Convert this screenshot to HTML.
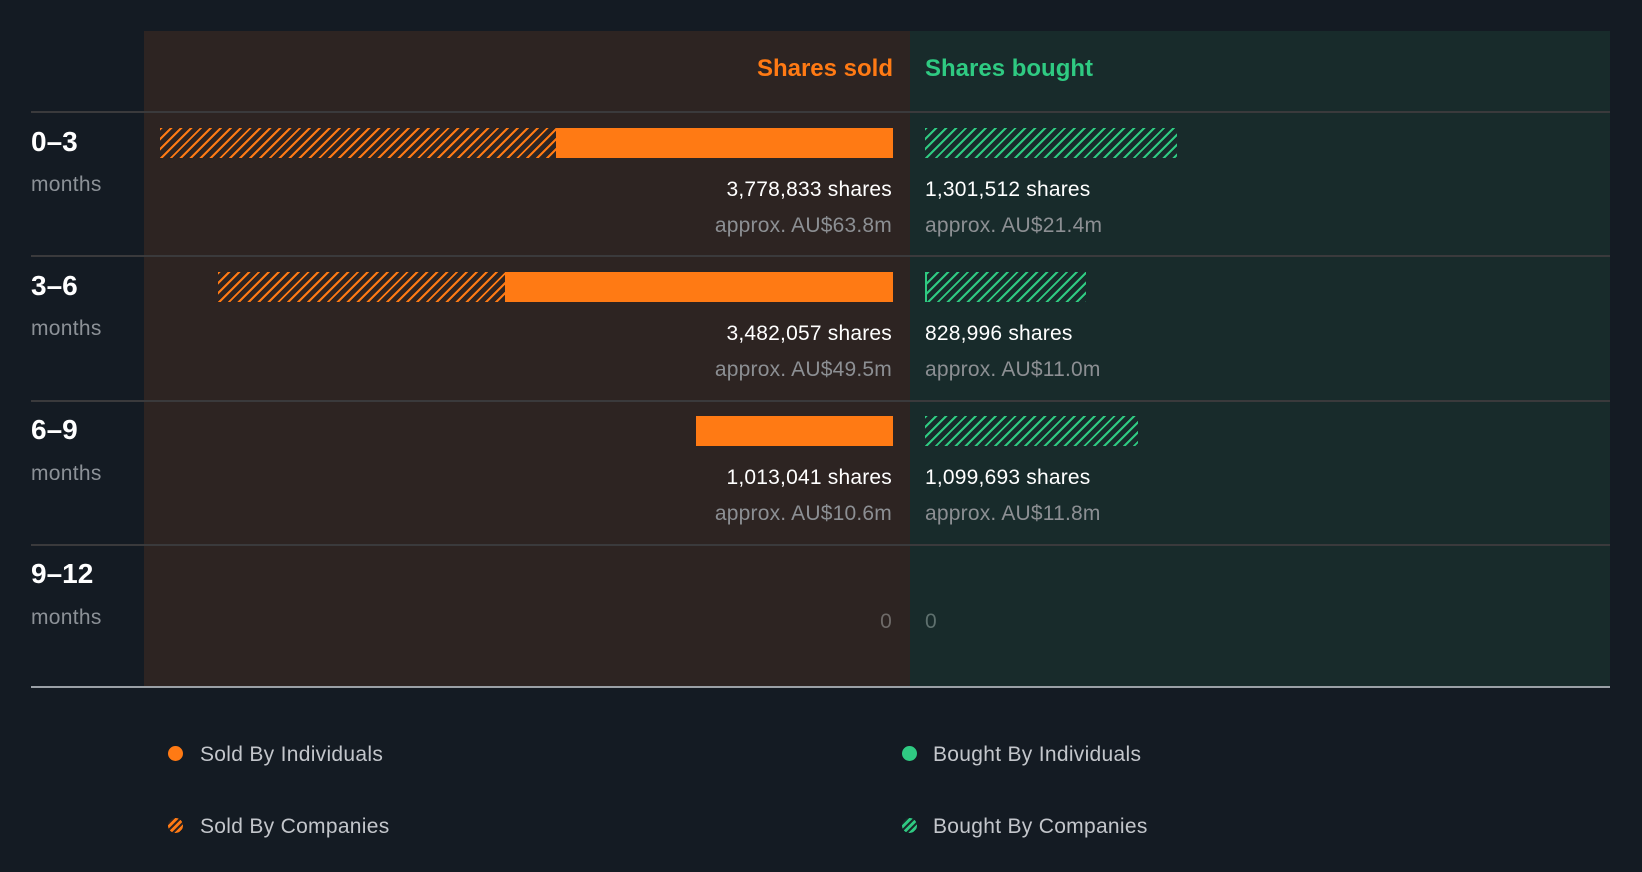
<!DOCTYPE html><html><head><style>
body{margin:0;width:1642px;height:872px;background:#141b23;font-family:"Liberation Sans",sans-serif;position:relative;overflow:hidden}
div{position:absolute}
.sc{left:144px;top:31px;width:766px;height:656px;background:#2d2422}
.bc{left:910px;top:31px;width:700px;height:656px;background:#182b2b}
.ln{left:31px;width:1579px;height:2px;background:#3a3a3c}
.hs{background:repeating-linear-gradient(135deg,#ff7a14 0 2px,transparent 2px 7px);height:30px}
.hb{background:repeating-linear-gradient(135deg,#2fca82 0 2px,transparent 2px 7px);height:30px}
.so{background:#ff7a14;height:30px}
.r{text-align:right;width:600px}
.t1{font-size:21px;color:#fff;letter-spacing:0.2px}
.t2{font-size:21px;color:#8c8f93;letter-spacing:0.2px}
.lb{left:31px;font-size:28px;font-weight:bold;color:#fff}
.mo{left:31px;font-size:21px;color:#8c9197;letter-spacing:0.3px}
.lg{font-size:21px;color:#c3c6cb;letter-spacing:0.3px}
.dot{width:15px;height:15px;border-radius:50%}
</style></head><body>
<div class="sc"></div><div class="bc"></div>
<div style="left:593px;width:300px;top:55px;text-align:right;font-size:24px;font-weight:bold;color:#ff7a14">Shares sold</div>
<div style="left:925px;top:55px;font-size:24px;font-weight:bold;color:#2fca82">Shares bought</div>
<div class="ln" style="top:111px"></div><div class="ln" style="top:255px"></div><div class="ln" style="top:400px"></div><div class="ln" style="top:544px"></div>
<div style="left:31px;top:686px;width:1579px;height:2px;background:#9aa0a6"></div>

<div class="lb" style="top:126px">0–3</div><div class="mo" style="top:173px">months</div>
<div class="lb" style="top:270px">3–6</div><div class="mo" style="top:317px">months</div>
<div class="lb" style="top:414px">6–9</div><div class="mo" style="top:462px">months</div>
<div class="lb" style="top:558px">9–12</div><div class="mo" style="top:606px">months</div>

<div class="hs" style="left:160px;width:396px;top:128px"></div><div class="so" style="left:556px;width:337px;top:128px"></div>
<div class="hb" style="left:925px;width:252px;top:128px"></div>
<div class="r t1" style="left:292px;top:178px">3,778,833 shares</div><div class="r t2" style="left:292px;top:214px">approx. AU$63.8m</div>
<div class="t1" style="left:925px;top:178px">1,301,512 shares</div><div class="t2" style="left:925px;top:214px">approx. AU$21.4m</div>

<div class="hs" style="left:218px;width:287px;top:272px"></div><div class="so" style="left:505px;width:388px;top:272px"></div>
<div class="hb" style="left:925px;width:161px;top:272px;border-left:2px solid #2fca82;box-sizing:border-box"></div>
<div class="r t1" style="left:292px;top:322px">3,482,057 shares</div><div class="r t2" style="left:292px;top:358px">approx. AU$49.5m</div>
<div class="t1" style="left:925px;top:322px">828,996 shares</div><div class="t2" style="left:925px;top:358px">approx. AU$11.0m</div>

<div class="so" style="left:696px;width:197px;top:416px"></div>
<div class="hb" style="left:925px;width:213px;top:416px"></div>
<div class="r t1" style="left:292px;top:466px">1,013,041 shares</div><div class="r t2" style="left:292px;top:502px">approx. AU$10.6m</div>
<div class="t1" style="left:925px;top:466px">1,099,693 shares</div><div class="t2" style="left:925px;top:502px">approx. AU$11.8m</div>

<div class="r t2" style="left:292px;top:610px;color:#6e6a68">0</div>
<div class="t2" style="left:925px;top:610px;color:#5e706e">0</div>

<div class="dot" style="left:168px;top:746px;background:#ff7a14"></div><div class="lg" style="left:200px;top:743px">Sold By Individuals</div>
<div class="dot" style="left:168px;top:818px;background:repeating-linear-gradient(135deg,#ff7a14 0 3px,#2d2422 3px 5px)"></div><div class="lg" style="left:200px;top:815px">Sold By Companies</div>
<div class="dot" style="left:902px;top:746px;background:#2fca82"></div><div class="lg" style="left:933px;top:743px">Bought By Individuals</div>
<div class="dot" style="left:902px;top:818px;background:repeating-linear-gradient(135deg,#2fca82 0 3px,#182b2b 3px 5px)"></div><div class="lg" style="left:933px;top:815px">Bought By Companies</div>
</body></html>
